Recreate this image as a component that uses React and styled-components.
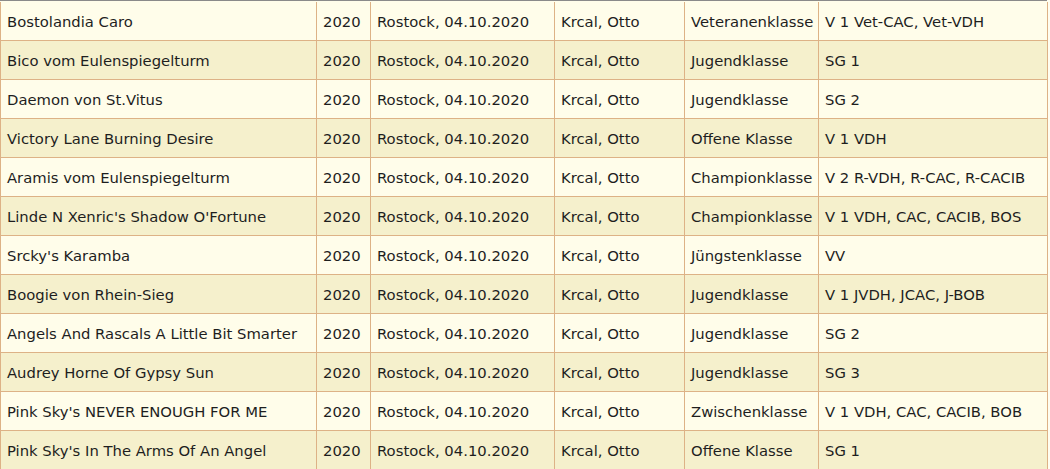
import React from 'react';
import styled, { createGlobalStyle } from 'styled-components';

const GlobalStyle = createGlobalStyle`
  body {
    margin: 0;
    background: #fffef0;
    font-family: "DejaVu Sans", Verdana, sans-serif;
  }
`;

const Wrap = styled.div`
  border-top: 1px solid #8a8a8a;
  padding-top: 1px;
  background: #fffdea;
  width: 1047px;
`;

const Table = styled.table`
  border-collapse: collapse;
  table-layout: fixed;
  width: 1047px;
  font-size: 14.8px;
  color: #1e1e1e;
`;

const Row = styled.tr`
  background: ${(p) => (p.$alt ? '#f5f0cc' : '#fffdea')};
`;

const Cell = styled.td`
  border: 1px solid #ddb286;
  border-top: none;
  height: 37px;
  padding: 1px 0 0 6px;
  white-space: nowrap;
  overflow: hidden;
`;

const widths = [316, 54, 184, 130, 134, 229];

const rows = [
  ['Bostolandia Caro', 'Veteranenklasse', 'V 1 Vet-CAC, Vet-VDH'],
  ['Bico vom Eulenspiegelturm', 'Jugendklasse', 'SG 1'],
  ['Daemon von St.Vitus', 'Jugendklasse', 'SG 2'],
  ['Victory Lane Burning Desire', 'Offene Klasse', 'V 1 VDH'],
  ['Aramis vom Eulenspiegelturm', 'Championklasse', 'V 2 R-VDH, R-CAC, R-CACIB'],
  ["Linde N Xenric's Shadow O'Fortune", 'Championklasse', 'V 1 VDH, CAC, CACIB, BOS'],
  ["Srcky's Karamba", 'Jüngstenklasse', 'VV'],
  ['Boogie von Rhein-Sieg', 'Jugendklasse', 'V 1 JVDH, JCAC, J-BOB'],
  ['Angels And Rascals A Little Bit Smarter', 'Jugendklasse', 'SG 2'],
  ['Audrey Horne Of Gypsy Sun', 'Jugendklasse', 'SG 3'],
  ["Pink Sky's NEVER ENOUGH FOR ME", 'Zwischenklasse', 'V 1 VDH, CAC, CACIB, BOB'],
  ["Pink Sky's In The Arms Of An Angel", 'Offene Klasse', 'SG 1'],
];

export default function App() {
  return (
    <>
      <GlobalStyle />
      <Wrap>
        <Table>
          <colgroup>
            {widths.map((w, i) => (
              <col key={i} style={{ width: w }} />
            ))}
          </colgroup>
          <tbody>
            {rows.map(([name, klasse, result], i) => (
              <Row key={i} $alt={i % 2 === 1}>
                <Cell>{name}</Cell>
                <Cell>2020</Cell>
                <Cell>Rostock, 04.10.2020</Cell>
                <Cell>Krcal, Otto</Cell>
                <Cell>{klasse}</Cell>
                <Cell>{result}</Cell>
              </Row>
            ))}
          </tbody>
        </Table>
      </Wrap>
    </>
  );
}
